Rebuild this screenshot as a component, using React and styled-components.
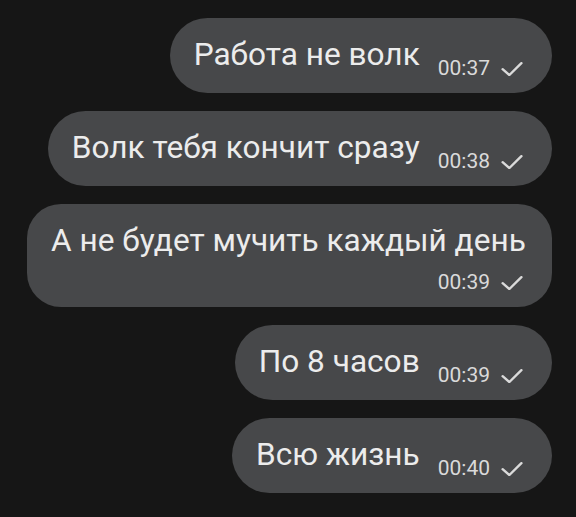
import React from "react";
import styled, { createGlobalStyle } from "styled-components";

const Global = createGlobalStyle`
  html, body { margin: 0; padding: 0; background: #161616; }
  body { font-family: Roboto, "Noto Sans", sans-serif; }
`;

const Chat = styled.div`
  display: flex;
  flex-direction: column;
  align-items: flex-end;
  gap: 18px;
  padding: 18px 24px 24px 24px;
  min-height: 517px;
  box-sizing: border-box;
  background: #161616;
`;

const Bubble = styled.div`
  box-sizing: border-box;
  max-width: 525px;
  display: flex;
  flex-wrap: wrap;
  justify-content: flex-end;
  align-items: flex-end;
  column-gap: 18px;
  row-gap: 3px;
  padding: 19px 26px 12px 24px;
  background: #47484a;
  border-radius: ${(p) => (p.$tall ? "34px" : "38px")};
`;

const Text = styled.div`
  flex: 1 1 auto;
  font-size: 31.6px;
  line-height: 36px;
  color: #ececec;
  margin-bottom: 8px;
  white-space: nowrap;
`;

const Meta = styled.div`
  display: flex;
  align-items: center;
  gap: 11px;
  margin-right: 3px;
  font-size: 21px;
  line-height: 25px;
  color: #dadada;
`;

const Check = () => (
  <svg width="22" height="14" viewBox="0 0 22 14" fill="none">
    <path
      d="M1.6 7.2 L8.4 13 L20.4 1.2"
      stroke="#dadada"
      strokeWidth="2.4"
      strokeLinecap="round"
      strokeLinejoin="round"
    />
  </svg>
);

const messages = [
  { text: "Работа не волк", time: "00:37" },
  { text: "Волк тебя кончит сразу", time: "00:38" },
  { text: "А не будет мучить каждый день", time: "00:39", tall: true },
  { text: "По 8 часов", time: "00:39" },
  { text: "Всю жизнь", time: "00:40" },
];

export default function App() {
  return (
    <>
      <Global />
      <Chat>
        {messages.map((m, i) => (
          <Bubble key={i} $tall={m.tall}>
            <Text>{m.text}</Text>
            <Meta>
              <span>{m.time}</span>
              <Check />
            </Meta>
          </Bubble>
        ))}
      </Chat>
    </>
  );
}
